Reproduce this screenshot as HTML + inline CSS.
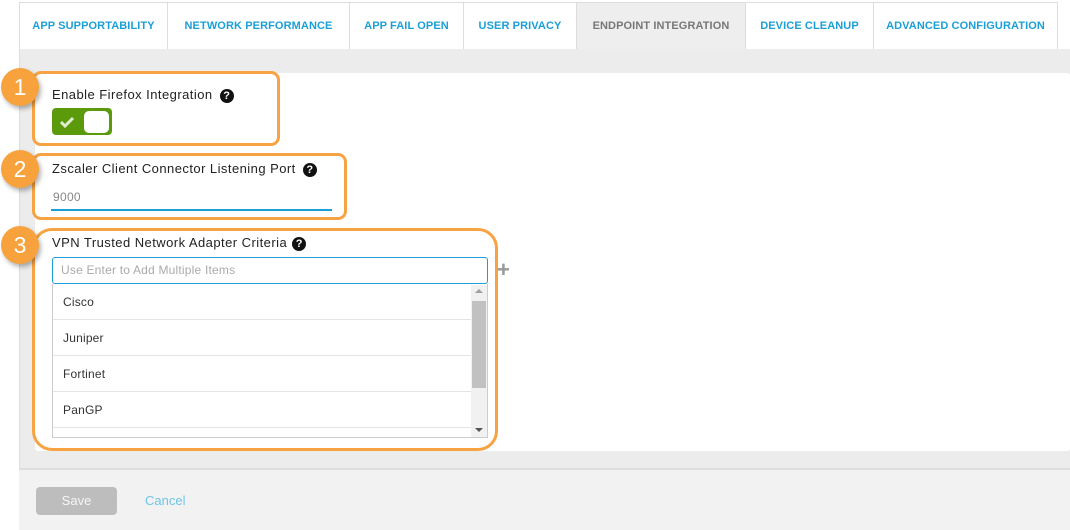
<!DOCTYPE html>
<html><head><style>
*{box-sizing:border-box;margin:0;padding:0}
body{width:1070px;height:530px;background:#fff;font-family:"Liberation Sans",sans-serif;position:relative;overflow:hidden}
.abs{position:absolute}
.tab{position:absolute;top:2px;height:47px;border:1px solid #ddd;border-bottom:none;background:#fff;color:#1a9fd6;font-weight:bold;font-size:11px;display:flex;align-items:center;justify-content:center;letter-spacing:0.1px}
.lbl{position:absolute;font-size:13px;color:#222;letter-spacing:0.45px}
.q{display:inline-block;width:14px;height:14px;border-radius:50%;background:#111;color:#fff;font-size:11px;font-weight:bold;text-align:center;line-height:14px;margin-left:7px;vertical-align:0px;letter-spacing:0}
.badge{position:absolute;width:38px;height:38px;border-radius:50%;background:#f7a23c;color:#fff;font-size:23px;text-align:center;line-height:38px;box-shadow:2px 3px 5px rgba(0,0,0,.3)}
.obox{position:absolute;border:3px solid #f8a343}
.item{position:absolute;left:53px;width:418px;height:36px;border-bottom:1px solid #e4e4e4;font-size:12px;color:#333;padding-left:10px;line-height:36px;letter-spacing:0.2px}
</style></head><body>
<div class="abs" style="left:19px;top:49px;width:1051px;height:481px;background:#ececec;border-left:1px solid #ddd"></div>
<div class="abs" style="left:19px;top:2px;width:1051px;height:1px;background:#ddd"></div>
<div class="tab" style="left:19px;width:149px">APP SUPPORTABILITY</div>
<div class="tab" style="left:167px;width:183px">NETWORK PERFORMANCE</div>
<div class="tab" style="left:349px;width:115px">APP FAIL OPEN</div>
<div class="tab" style="left:463px;width:114px">USER PRIVACY</div>
<div class="tab" style="left:576px;width:170px;background:#eee;color:#777">ENDPOINT INTEGRATION</div>
<div class="tab" style="left:745px;width:129px">DEVICE CLEANUP</div>
<div class="tab" style="left:873px;width:185px">ADVANCED CONFIGURATION</div>
<div class="abs" style="left:1057px;top:2px;width:13px;height:47px;border-left:1px solid #ddd;background:#fff"></div>
<div class="abs" style="left:35px;top:73px;width:1035px;height:378px;background:#fff;border-radius:3px"></div>
<div class="abs" style="left:19px;top:468px;width:1051px;height:62px;background:#f2f2f2;border-top:2px solid #ddd"></div>
<div class="abs" style="left:36px;top:487px;width:81px;height:28px;background:#bdbdbd;border-radius:4px;color:#f5f5f5;font-size:13px;text-align:center;line-height:28px">Save</div>
<div class="abs" style="left:145px;top:493px;font-size:13px;color:#6ec6e8">Cancel</div>

<div class="obox" style="left:32px;top:71px;width:248px;height:75px;border-radius:9px"></div>
<div class="lbl" style="left:52px;top:87px">Enable Firefox Integration<span class="q">?</span></div>
<div class="abs" style="left:52px;top:108px;width:60px;height:27px;background:#5a9a0b;border-radius:4px"></div>
<div class="abs" style="left:84px;top:111px;width:25px;height:22px;background:#fff;border-radius:5px"></div>
<svg class="abs" style="left:59px;top:115px" width="16" height="14"><path d="M2 7l4 4 8-8" stroke="#dfeccf" stroke-width="3" fill="none"/></svg>

<div class="obox" style="left:32px;top:153px;width:315px;height:67px;border-radius:9px"></div>
<div class="lbl" style="left:52px;top:161px">Zscaler Client Connector Listening Port<span class="q">?</span></div>
<div class="abs" style="left:53px;top:190px;font-size:12px;color:#888;letter-spacing:0.3px">9000</div>
<div class="abs" style="left:51px;top:209px;width:281px;height:2px;background:#1a9fd6"></div>

<div class="obox" style="left:32px;top:228px;width:466px;height:223px;border-radius:20px"></div>
<div class="lbl" style="left:52px;top:235px">VPN Trusted Network Adapter Criteria<span class="q" style="margin-left:5px">?</span></div>
<div class="abs" style="left:52px;top:257px;width:436px;height:27px;border:1px solid #1a9fd6;border-radius:3px;font-size:12px;color:#aaa;padding-left:8px;line-height:25px;letter-spacing:0.2px">Use Enter to Add Multiple Items</div>
<div class="abs" style="left:497px;top:257px;font-size:22px;color:#999;font-weight:bold">+</div>
<div class="abs" style="left:52px;top:284px;width:436px;height:154px;border:1px solid #ccc;border-top:none;overflow:hidden">
</div>
<div class="item" style="top:284px">Cisco</div>
<div class="item" style="top:320px">Juniper</div>
<div class="item" style="top:356px">Fortinet</div>
<div class="item" style="top:392px">PanGP</div>
<div class="abs" style="left:471px;top:285px;width:16px;height:152px;background:#f1f1f1"></div>
<div class="abs" style="left:472px;top:301px;width:14px;height:87px;background:#c1c1c1"></div>
<div class="abs" style="left:475px;top:289px;width:0;height:0;border:4px solid transparent;border-bottom-color:#a0a0a0;border-top:none"></div>
<div class="abs" style="left:475px;top:428px;width:0;height:0;border:4px solid transparent;border-top-color:#555;border-bottom:none"></div>

<div class="badge" style="left:1px;top:68px">1</div>
<div class="badge" style="left:1px;top:150px">2</div>
<div class="badge" style="left:1px;top:226px">3</div>
</body></html>
